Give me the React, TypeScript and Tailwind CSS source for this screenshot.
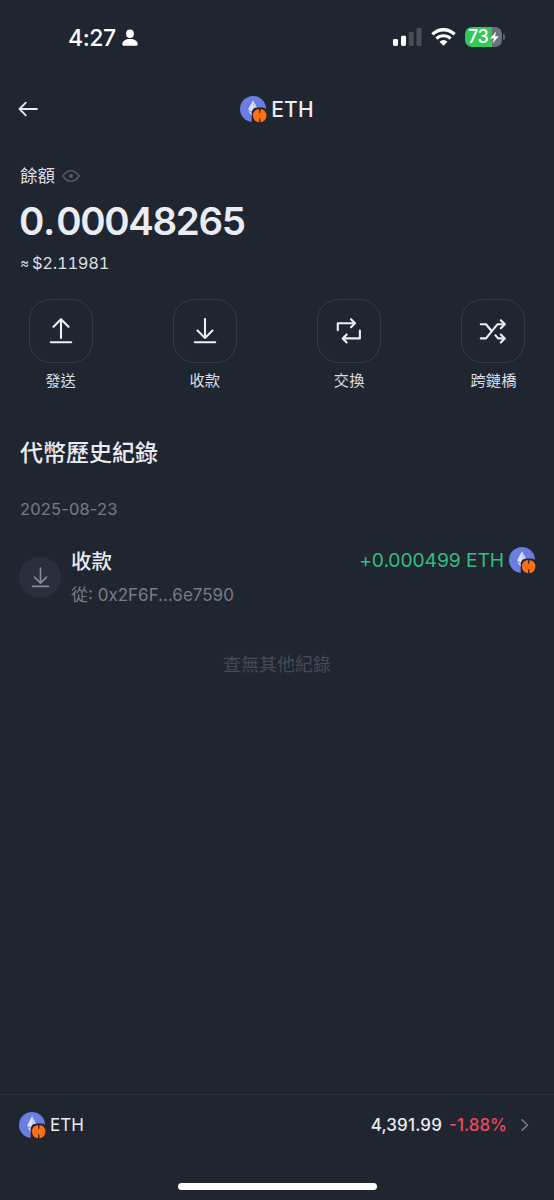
import type { ReactNode } from 'react';

function TokenIcon() {
  return (
    <svg className="h-7 w-7 shrink-0" viewBox="0 0 28 28">
      <circle cx="13" cy="13" r="13" fill="#6a7de0" />
      <path d="M13 4.2 L8.1 13.6 L13 16.6 L17.9 13.6 Z" fill="#dde3fb" />
      <path d="M13 4.2 L17.9 13.6 L13 16.6 Z" fill="#c3ccf5" />
      <path d="M8.1 14.8 L13 21.6 L15 18.6 L13 17.6 Z" fill="#dde3fb" />
      <path d="M11.7 26.5 V17.8 Q11.7 11.4 18 11.4 H22 Q26.4 11.4 26.6 15 V26.5 Z" fill="#20222d" />
      <rect x="13" y="12.9" width="13.4" height="13.3" rx="6.2" fill="#ff6f14" />
      <path d="M19 12.6 h1.6 l-.4 4.6 h-.8 Z M19 26.6 l.4 -4.6 h.8 l.4 4.6 Z" fill="#20222d" />
    </svg>
  );
}

function ArrowIcon({ up = false, className }: { up?: boolean; className: string }) {
  return (
    <svg className={className} viewBox="0 0 24 26" fill="none" stroke="currentColor" strokeWidth="2.1" strokeLinecap="round" strokeLinejoin="round">
      {up ? <path d="M12 20 V1.5 M4.5 8.7 L12 1.2 L19.5 8.7" /> : <path d="M12 1 V20 M4.5 12.5 L12 20 L19.5 12.5" />}
      <path d="M1.8 24.2 H22.2" />
    </svg>
  );
}

function SwapIcon() {
  return (
    <svg className="h-7 w-7" viewBox="0 0 28 28" fill="none" stroke="currentColor" strokeWidth="2.1" strokeLinecap="round" strokeLinejoin="round">
      <path d="M2.8 13.2 V6.2 H19.5 M16 2.2 L20 6.2 L16 10.2" />
      <path d="M24.9 13.6 V21.4 H8.2 M11.7 17.4 L7.7 21.4 L11.7 25.4" />
    </svg>
  );
}

function BridgeIcon() {
  return (
    <svg className="h-7 w-7" viewBox="0 0 28 28" fill="none" stroke="currentColor" strokeWidth="2.1" strokeLinecap="round" strokeLinejoin="round">
      <path d="M1.8 7.3 H7 L12.8 14.2 M1.8 21.4 H7 L18.4 7.3 H25.3" />
      <path d="M16.4 18.2 L19 21.4 H25.3" />
      <path d="M21.8 3.3 L25.8 7.3 L21.8 11.3 M21.8 17.4 L25.8 21.4 L21.8 25.4" />
    </svg>
  );
}

function Action({ label, children }: { label: string; children: ReactNode }) {
  return (
    <div className="flex w-[65px] flex-col items-center">
      <div className="flex h-16 w-16 items-center justify-center rounded-[21px] border border-[#343a45] text-[#eceef5]">
        {children}
      </div>
      <div className="mt-[7px] h-[22px] text-[15.3px] leading-[22px] whitespace-nowrap text-[#dcdee5]">{label}</div>
    </div>
  );
}

function StatusBar() {
  return (
    <div className="flex h-[75px] items-center pl-[68px] text-white">
      <span className="w-[49px] pt-px text-[23px] leading-7 font-medium tracking-[-0.4px] whitespace-nowrap">4:27</span>
      <svg className="ml-[5px] h-[18px] w-4" viewBox="0 0 16 18" fill="currentColor">
        <ellipse cx="8" cy="4.8" rx="3.9" ry="4.3" />
        <path d="M.3 14.9 C.3 12 3.4 9.9 8 9.9 C12.6 9.9 15.7 12 15.7 14.9 Q15.7 16.8 13.8 16.8 H2.2 Q.3 16.8 .3 14.9 Z" />
      </svg>
      <svg className="-mt-[2px] ml-[255px] h-[18px] w-[29px]" viewBox="0 0 29 18" fill="currentColor">
        <rect x="0" y="11" width="5" height="7" rx="1.4" />
        <rect x="8" y="7.8" width="5" height="10.2" rx="1.4" />
        <rect x="15.7" y="4" width="5" height="14" rx="1.4" fill="#484d56" />
        <rect x="23.5" y="0" width="5" height="18" rx="1.4" fill="#484d56" />
      </svg>
      <svg className="-mt-[2px] ml-[9px] h-[18px] w-[25px]" viewBox="0 0 25 18">
        <path d="M1.4 6.4 C7.7 .2 17.3 .2 23.6 6.4" fill="none" stroke="currentColor" strokeWidth="3.3" />
        <path d="M5.4 10.6 C9.4 6.8 15.6 6.8 19.6 10.6" fill="none" stroke="currentColor" strokeWidth="3.1" />
        <path d="M8.5 13.8 Q12.5 10.4 16.5 13.8 L12.5 17.8 Z" fill="currentColor" />
      </svg>
      <div className="-mt-px ml-[9px] flex h-5 w-[37px] items-center overflow-hidden rounded-[7px] bg-[linear-gradient(90deg,#34c759_73%,#6b6f76_73%)] pl-[3px]">
        <span className="w-[22px] text-[18px] leading-5 font-medium tracking-[-0.4px]">73</span>
        <svg className="h-[13px] w-[9px]" viewBox="0 0 9 12" fill="currentColor"><path d="M6.2 0 L.2 6.9 H4 L2.5 12 L8.8 4.8 H5 Z" /></svg>
      </div>
      <span className="-mt-px ml-[1px] h-[6px] w-[2px] rounded-r-full bg-[#5d6269]" />
    </div>
  );
}

export default function App() {
  return (
    <div className="flex h-[1200px] w-[554px] flex-col overflow-hidden bg-[#20262f] font-['Inter','Noto_Sans_CJK_TC',sans-serif] text-[#eaecf3]">
      <StatusBar />
      <header className="grid h-[68px] grid-cols-[1fr_auto_1fr] items-center px-[18px]">
        <svg className="h-4 w-5" viewBox="0 0 20 16" fill="none" stroke="currentColor" strokeWidth="1.8" strokeLinecap="round" strokeLinejoin="round">
          <path d="M19 8 H1.6 M7.8 1.6 L1.5 8 L7.8 14.4" />
        </svg>
        <div className="flex items-center">
          <span className="mt-[2px]"><TokenIcon /></span>
          <span className="mt-[2px] ml-[3px] text-[21px] leading-7 font-medium tracking-[0.2px]">ETH</span>
        </div>
        <span />
      </header>

      <section className="px-5">
        <div className="mt-[18px] flex h-7 items-center">
          <span className="pt-[2px] text-[17.5px] leading-7 text-[#dcdee5]">餘額</span>
          <svg className="mt-[1px] ml-[7px] h-3 w-[18px] text-[#545a66]" viewBox="0 0 18 12" fill="none" stroke="currentColor" strokeWidth="1.4" strokeLinejoin="round">
            <path d="M.9 6 C5.5 -1 12.5 -1 17.1 6 C12.5 13 5.5 13 .9 6 Z" />
            <circle cx="9" cy="6" r="2.1" fill="currentColor" stroke="none" />
          </svg>
        </div>
        <div className="mt-[6px] -ml-px h-[52px] text-[38.5px] leading-[52px] font-semibold tracking-[-1.35px] whitespace-nowrap">
          0<span className="tracking-[0.8px]">.</span>00048265
        </div>
        <div className="mt-[4px] flex h-6 items-center text-[16.5px] leading-6 text-[#dcdee5]">
          <span className="w-[12px] text-[14px]">≈</span>
          <span className="tracking-[-0.25px] tabular-nums">$2.11981</span>
        </div>
      </section>

      <section className="mt-[24px] flex justify-between px-7">
        <Action label="發送"><ArrowIcon up className="h-[26px] w-6" /></Action>
        <Action label="收款"><ArrowIcon className="h-[26px] w-6" /></Action>
        <Action label="交換"><SwapIcon /></Action>
        <Action label="跨鏈橋"><BridgeIcon /></Action>
      </section>

      <section className="mt-[45px] px-5">
        <h2 className="h-8 text-[23px] leading-8 font-medium">代幣歷史紀錄</h2>
        <div className="mt-[28px] h-6 text-[16.5px] leading-6 tracking-[0.15px] text-[#777b88]">2025-08-23</div>
        <div className="mt-[22px] flex h-[70px]">
          <div className="mt-[14px] -ml-px flex h-[41px] w-[42px] shrink-0 items-center justify-center rounded-full bg-[#2a2f3d] text-[#858996]">
            <ArrowIcon className="h-[21px] w-[19px]" />
          </div>
          <div className="ml-[10px] flex-1">
            <div className="flex h-9 items-center">
              <span className="pt-px text-[20.5px] leading-9 font-medium">收款</span>
              <span className="-mt-[2px] mr-[5px] ml-auto text-[19.3px] leading-9 tracking-[-0.1px] text-[#32bd87]">+0.000499 ETH</span>
              <span className="-mr-[3px] -mt-px"><TokenIcon /></span>
            </div>
            <div className="h-8 text-[17px] leading-8 text-[#777b88]">從: 0x2F6F...6e7590</div>
          </div>
        </div>
        <div className="mt-[38px] h-7 text-center text-[18px] leading-7 text-[#454a56]">查無其他紀錄</div>
      </section>

      <footer className="mt-auto h-[106px] border-t border-[#2d333d] px-[19px]">
        <div className="flex h-[59px] items-center">
          <span className="mt-[3px]"><TokenIcon /></span>
          <span className="ml-[3px] text-[17px] leading-7">ETH</span>
          <span className="ml-auto text-[17px] leading-7 font-medium tracking-[0.15px]">4,391.99</span>
          <span className="ml-[7px] text-[17px] leading-7 font-medium text-[#ee4560]">-1.88%</span>
          <svg className="mt-[1px] mr-[6px] ml-[14px] h-3 w-2 text-[#737884]" viewBox="0 0 8 12" fill="none" stroke="currentColor" strokeWidth="1.6" strokeLinecap="round" strokeLinejoin="round"><path d="M1 .8 L6.6 6 L1 11.2" /></svg>
        </div>
        <div className="mx-auto mt-[29px] h-[7px] w-[199px] rounded-full bg-white" />
      </footer>
    </div>
  );
}
